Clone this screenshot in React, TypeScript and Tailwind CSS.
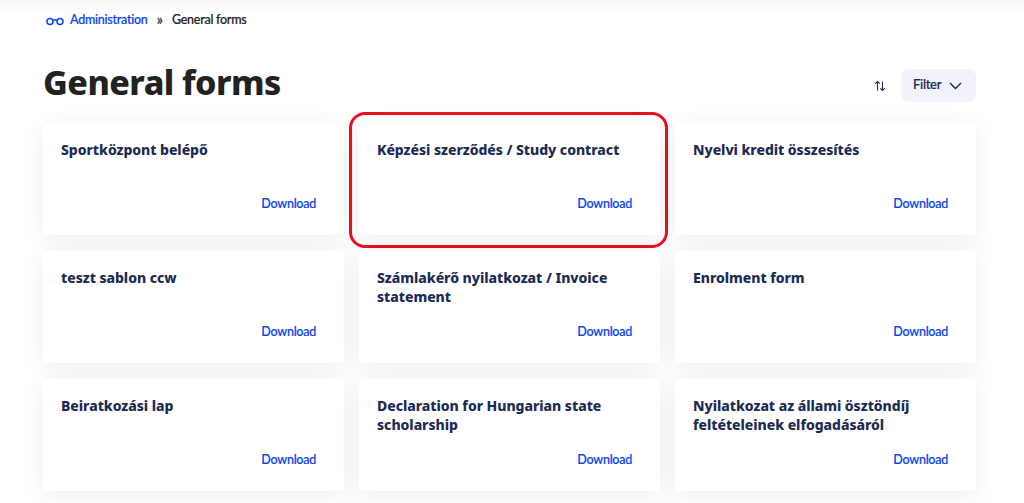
const cards = [
  "Sportközpont belépő",
  "Képzési szerződés / Study contract",
  "Nyelvi kredit összesítés",
  "teszt sablon ccw",
  "Számlakérő nyilatkozat / Invoice statement",
  "Enrolment form",
  "Beiratkozási lap",
  "Declaration for Hungarian state scholarship",
  "Nyilatkozat az állami ösztöndíj feltételeinek elfogadásáról",
];

export default function App() {
  return (
    <div className="h-[503px] w-[1024px] overflow-hidden bg-white font-['Noto_Sans',sans-serif] text-[#1f2a4d]">
      <div className="h-3 bg-gradient-to-b from-[#f5f5f5] to-white" />
      <nav className="flex h-[14px] items-center pl-[46px] pt-[2px] font-['Lato',sans-serif] text-[12.5px] font-medium tracking-[-0.25px] [-webkit-text-stroke:0.2px]">
        <svg width="18" height="10" viewBox="0 0 18 10" fill="none" stroke="#0b45e6" strokeWidth="1.5" className="mr-[6px] mt-[2px]">
          <circle cx="4" cy="5.5" r="3" />
          <circle cx="14" cy="5.5" r="3" />
          <path d="M7 4.5c1-.8 3-.8 4 0" />
        </svg>
        <span className="text-[#0b45e6]">Administration</span>
        <span className="mx-[9px] mb-[3px] text-[15px] leading-[14px] text-[#333]">»</span>
        <span className="text-[#222]">General forms</span>
      </nav>
      <div className="mt-[31px] flex h-[50px] items-start justify-between pl-[43px] pr-[48px]">
        <h1 className="text-[34px] font-extrabold leading-[50px] tracking-[-0.55px] text-[#222]">General forms</h1>
        <div className="mt-3 flex items-center gap-[15px]">
          <svg width="12" height="12" viewBox="0 0 12 12" fill="none" stroke="#1f2a4d" strokeWidth="1.1">
            <path d="M3.5 10.5V1.5M1.3 3.7 3.5 1.5 5.7 3.7M8.5 1.5v9M6.3 8.3l2.2 2.2 2.2-2.2" />
          </svg>
          <button className="flex h-[33px] w-[75px] items-center gap-[8px] rounded-lg bg-[#f1f2fb] pb-[2px] pl-3 font-['Lato',sans-serif] text-[13px] font-medium tracking-[-0.3px] text-[#1f2a4d] [-webkit-text-stroke:0.2px]">
            Filter
            <svg width="13" height="8" viewBox="0 0 13 8" fill="none" stroke="#1f2a4d" strokeWidth="1.4" className="mt-[2px]">
              <path d="M1 1l5.5 5.5L12 1" />
            </svg>
          </button>
        </div>
      </div>
      <div className="ml-[43px] mt-4 grid w-[933px] grid-cols-3 gap-x-[15px] gap-y-4">
        {cards.map((title, i) => (
          <div key={title} className="relative flex h-[112px] flex-col justify-between bg-white pb-[23px] pl-[18px] pr-[28px] pt-[18px] shadow-[0_4px_24px_rgba(0,0,0,0.07)]">
            <h2 className="text-[14px] font-extrabold leading-[18.5px] tracking-[-0.05px] text-[#1c2b52]">{title}</h2>
            <a className="self-end font-['Lato',sans-serif] text-[12.5px] font-medium leading-4 tracking-[-0.25px] text-[#0b45e6] [-webkit-text-stroke:0.2px]">Download</a>
            {i === 1 && (
              <div className="absolute -bottom-[13px] -left-[10px] -right-2 -top-[11px] rounded-[16px] border-[3px] border-[#e8101f]" />
            )}
          </div>
        ))}
      </div>
    </div>
  );
}
